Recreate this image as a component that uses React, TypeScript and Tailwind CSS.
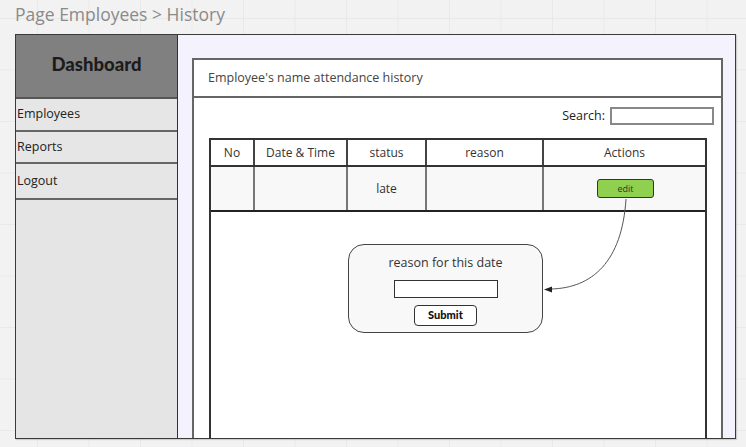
const COLUMNS = [
  { label: 'No', width: 'w-[44px]' },
  { label: 'Date & Time', width: 'w-[93px]' },
  { label: 'status', width: 'w-[79px]' },
  { label: 'reason', width: 'w-[117px]' },
  { label: 'Actions', width: 'flex-1' },
];

const MENU = [
  { label: 'Employees', h: 'h-[33px]' },
  { label: 'Reports', h: 'h-[32px]' },
  { label: 'Logout', h: 'h-[36px]' },
];

export default function App() {
  return (
    <div
      className="relative w-[746px] h-[447px] overflow-hidden bg-[#f2f2f2] bg-[linear-gradient(to_right,#e9e9e9_1px,transparent_1px),linear-gradient(to_bottom,#e9e9e9_1px,transparent_1px)] bg-[size:51.5px_51.5px] bg-[position:37px_18px]"
      style={{ fontFamily: '"Open Sans", "Liberation Sans", sans-serif' }}
    >
      {/* Title */}
      <div className="h-[34px] pl-[15px] pt-[2px] text-[17.5px] leading-[24px] text-[#8a8a8a]">
        Page Employees &gt; History
      </div>

      {/* Frame */}
      <div className="ml-[15px] w-[721px] h-[405px] flex border border-[#3a3a3a] shadow-[1px_1px_1px_rgba(0,0,0,0.15)]">
        {/* Sidebar */}
        <div className="w-[162px] shrink-0 flex flex-col bg-[#e5e5e5] border-r border-[#333]">
          <div className="h-[64px] bg-[#808080] flex items-center justify-center border-b-2 border-[#555]">
            <span
              className="text-[18.5px] font-black text-[#1c1c1c] -mt-[3px]"
              style={{ fontFamily: 'Lato, "Noto Sans", sans-serif' }}
            >
              Dashboard
            </span>
          </div>
          {MENU.map((m) => (
            <div
              key={m.label}
              className={`${m.h} flex items-center pl-[1px] text-[12.5px] text-[#222] bg-[#e6e6e6] border-b-2 border-[#666]`}
            >
              {m.label}
            </div>
          ))}
        </div>

        {/* Main */}
        <div className="flex-1 bg-[#f4f2fd] pt-[23px] pl-[14px] pr-[12px] flex flex-col">
          <div className="flex-1 flex flex-col bg-white border-2 border-b-0 border-[#666]">
            <div className="h-[38px] shrink-0 border-b-2 border-[#666] flex items-center pl-[14px] text-[12.5px] text-[#444]">
              Employee's name attendance history
            </div>
            <div className="h-[40px] shrink-0 flex items-start justify-end pt-[9px] pr-[7px] gap-[5px]">
              <span className="text-[12.5px] leading-[18px] text-[#222]">Search:</span>
              <div className="w-[104px] h-[18px] border-2 border-[#888] bg-white" />
            </div>

            {/* Table */}
            <div className="relative flex-1 ml-[15px] mr-[14px] flex flex-col border-2 border-b-0 border-[#333]">
              <div className="h-[27px] flex border-b-2 border-[#333]">
                {COLUMNS.map((c, i) => (
                  <div
                    key={c.label}
                    className={`${c.width} flex items-center justify-center text-[12px] text-[#333] ${i < COLUMNS.length - 1 ? 'border-r-2 border-[#444]' : ''}`}
                  >
                    {c.label}
                  </div>
                ))}
              </div>
              <div className="h-[45px] flex bg-[#f8f8f8] border-b-2 border-[#222]">
                {COLUMNS.map((c, i) => (
                  <div
                    key={c.label}
                    className={`${c.width} flex items-center justify-center text-[12px] text-[#333] ${i < COLUMNS.length - 1 ? 'border-r-2 border-[#777]' : ''}`}
                  >
                    {c.label === 'status' ? 'late' : null}
                    {c.label === 'Actions' ? (
                      <div className="w-[57px] h-[19px] ml-[2px] rounded-[3px] bg-[#8fd14f] border border-[#333] flex items-center justify-center text-[9px] text-[#333]">
                        edit
                      </div>
                    ) : null}
                  </div>
                ))}
              </div>
              <div className="flex-1 bg-white" />

              {/* Popup */}
              <div className="absolute left-[137px] top-[104px] w-[195px] h-[89px] rounded-[16px] border border-[#444] bg-[#f8f8f8] flex flex-col items-center pt-[9px]">
                <span className="text-[12.5px] leading-[18px] text-[#333]">reason for this date</span>
                <div className="mt-[8px] w-[104px] h-[18px] border border-[#333] bg-white" />
                <div
                  className="mt-[7px] w-[63px] h-[21px] rounded-[4px] border border-[#333] bg-white flex items-center justify-center text-[11px] font-black text-[#111]"
                  style={{ fontFamily: 'Lato, "Noto Sans", sans-serif' }}
                >
                  Submit
                </div>
              </div>
            </div>
          </div>
        </div>
      </div>

      {/* Connector arrow */}
      <svg className="absolute left-0 top-0 pointer-events-none" width="746" height="447">
        <path d="M626 199 C 622 262, 592 288, 551 289" fill="none" stroke="#555" strokeWidth="1" />
        <polygon points="544,289.5 552,286.5 552,292.5" fill="#222" />
      </svg>
    </div>
  );
}
